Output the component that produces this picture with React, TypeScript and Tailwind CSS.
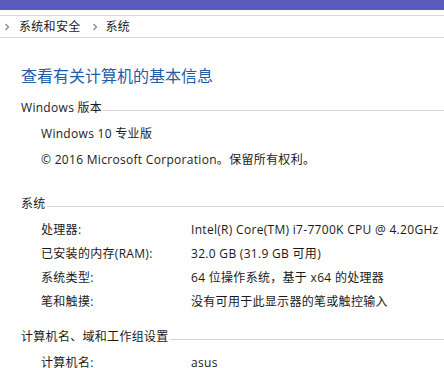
import React from "react";

const font = { fontFamily: '"Open Sans", "Noto Sans CJK SC", sans-serif' };

function Section({ title }: { title: string }) {
  return (
    <div className="flex items-center h-[14px]">
      <span className="text-[12px] leading-none text-[#1a1a1a] pr-px">{title}</span>
      <div className="flex-1 h-px bg-[#d8d8d8] mt-[4px]" />
    </div>
  );
}

function Row({ label, value }: { label: string; value: string }) {
  return (
    <div className="flex h-[24px] items-center text-[12px] text-[#1a1a1a] whitespace-nowrap">
      <span className="w-[150px] shrink-0">{label}</span>
      <span>{value}</span>
    </div>
  );
}

function Chevron() {
  return (
    <svg width="6" height="8" viewBox="0 0 6 8" className="shrink-0">
      <path d="M1.5 1 L4.5 4 L1.5 7" fill="none" stroke="#8a8a8a" strokeWidth="1.3" />
    </svg>
  );
}

export default function App() {
  return (
    <div className="w-[444px] h-[368px] overflow-hidden bg-white tracking-[0.3px]" style={font}>
      {/* title bar strip */}
      <div className="h-[10px] bg-[#5a5bbb]" />
      <div className="h-[5px] bg-white" />
      {/* breadcrumb */}
      <div className="h-[23px] border-y border-[#d9d9d9] flex items-center pl-[4px] text-[12px] text-[#1a1a1a]">
        <Chevron />
        <span className="pl-[9px]">系统和安全</span>
        <span className="pl-[11px]"><Chevron /></span>
        <span className="pl-[8px]">系统</span>
      </div>

      <div className="pl-[21px]">
        <h1 className="mt-[30px] h-[16px] text-[16px] leading-none tracking-normal text-[#1e5ea8]">查看有关计算机的基本信息</h1>

        <div className="mt-[17px]">
          <Section title="Windows 版本" />
        </div>
        <div className="pl-[20px] mt-[6px] text-[12px] text-[#1a1a1a] whitespace-nowrap">
          <div className="h-[26px] flex items-center">Windows 10 专业版</div>
          <div className="h-[26px] flex items-center">© 2016 Microsoft Corporation。保留所有权利。</div>
        </div>

        <div className="mt-[24px]">
          <Section title="系统" />
        </div>
        <div className="pl-[20px] mt-[7px]">
          <Row label="处理器:" value="Intel(R) Core(TM) i7-7700K CPU @ 4.20GHz" />
          <Row label="已安装的内存(RAM):" value="32.0 GB (31.9 GB 可用)" />
          <Row label="系统类型:" value="64 位操作系统，基于 x64 的处理器" />
          <Row label="笔和触摸:" value="没有可用于此显示器的笔或触控输入" />
        </div>

        <div className="mt-[16px]">
          <Section title="计算机名、域和工作组设置" />
        </div>
        <div className="pl-[20px] mt-[7px]">
          <Row label="计算机名:" value="asus" />
        </div>
      </div>
    </div>
  );
}
